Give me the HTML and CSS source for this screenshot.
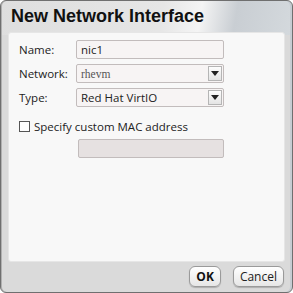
FILE: index.html
```html
<!DOCTYPE html>
<html lang="en">
<head>
    <meta charset="UTF-8">
    <title>New Network Interface</title>
    <link rel="stylesheet" href="styles.css">
</head>
<body>
    <div class="dialog">
        <h1 class="dialog-title">New Network Interface</h1>

        <div class="panel">
            <div class="form">
                <label class="form-label">Name:</label>
                <div class="text-input">nic1</div>

                <label class="form-label">Network:</label>
                <div class="select">
                    <span class="select-value serif">rhevm</span>
                    <span class="select-button">
                        <svg viewBox="0 0 8 5" width="8" height="5"><path d="M0 0h8L4 5z" fill="#222"/></svg>
                    </span>
                </div>

                <label class="form-label">Type:</label>
                <div class="select">
                    <span class="select-value">Red Hat VirtIO</span>
                    <span class="select-button">
                        <svg viewBox="0 0 8 5" width="8" height="5"><path d="M0 0h8L4 5z" fill="#222"/></svg>
                    </span>
                </div>
            </div>

            <div class="check-row">
                <span class="checkbox"></span>
                <span>Specify custom MAC address</span>
            </div>
            <div class="text-input mac-input"></div>
        </div>

        <div class="footer">
            <button class="btn btn-ok">OK</button>
            <button class="btn">Cancel</button>
        </div>
    </div>
</body>
</html>
```

FILE: styles.css
```css
* {
    margin: 0;
    padding: 0;
    box-sizing: border-box;
}

body {
    width: 293px;
    height: 293px;
    font-family: "Open Sans", "Liberation Sans", sans-serif;
    background: #ffffff;
}

.dialog {
    width: 293px;
    height: 293px;
    border: 1px solid #6f6f6f;
    border-radius: 6px;
    background: linear-gradient(100deg, #dedede 0%, #e6e6e6 55%, #f4f4f4 68%, #c9ced3 80%, #d4d9dd 100%);
    background-size: 100% 34px;
    background-repeat: no-repeat;
    background-color: #dadada;
    display: flex;
    flex-direction: column;
    box-shadow: inset 1px 0 0 #b0b0b0, inset -2px 0 0 #c6ccd2;
}

.dialog-title {
    height: 31px;
    padding: 5px 0 0 10px;
    font-family: "Liberation Sans", sans-serif;
    font-size: 18px;
    font-weight: 700;
    color: #111;
}

.panel {
    margin: 0 7px 0 7px;
    height: 230px;
    background: #f8f8f8;
    border: 1px solid #e6e6e6;
    border-radius: 3px;
    padding: 7px 0 0 10px;
    font-size: 11.5px;
    color: #222;
}

.form {
    display: grid;
    grid-template-columns: 57px 148px;
    row-gap: 5px;
    align-items: center;
}

.form-label {
    line-height: 18px;
}

.text-input {
    height: 19px;
    border: 1px solid #c2bcbc;
    border-radius: 2px;
    background: #f7f4f4;
    padding: 0 4px;
    line-height: 17px;
}

.select {
    height: 19px;
    border: 1px solid #c2bcbc;
    border-radius: 2px;
    background: #f7f4f4;
    display: flex;
    align-items: center;
    justify-content: space-between;
    padding: 0 1px 0 4px;
}

.serif {
    font-family: "Liberation Serif", serif;
    color: #555;
}

.select-button {
    width: 14px;
    height: 15px;
    border: 1px solid #b5b5b5;
    background: linear-gradient(#fdfdfd, #e4e4e4);
    display: flex;
    align-items: center;
    justify-content: center;
}

.check-row {
    display: flex;
    align-items: center;
    gap: 4px;
    margin-top: 12px;
    height: 14px;
}

.checkbox {
    width: 11px;
    height: 11px;
    border: 1px solid #555;
    background: #fdfdfd;
}

.mac-input {
    width: 146px;
    margin: 6px 0 0 59px;
    background: #e6e1e1;
}

.footer {
    display: flex;
    justify-content: flex-end;
    gap: 12px;
    padding: 4px 8px 0 0;
}

.btn {
    height: 21px;
    padding: 0 6px;
    border: 1px solid #9a9a9a;
    border-radius: 6px;
    background: linear-gradient(#ffffff, #e6e6e6);
    font-family: "Open Sans", sans-serif;
    font-size: 12px;
    color: #222;
    box-shadow: 0 1px 1px rgba(0, 0, 0, 0.2);
}

.btn-ok {
    font-weight: 700;
    color: #111;
}
```
